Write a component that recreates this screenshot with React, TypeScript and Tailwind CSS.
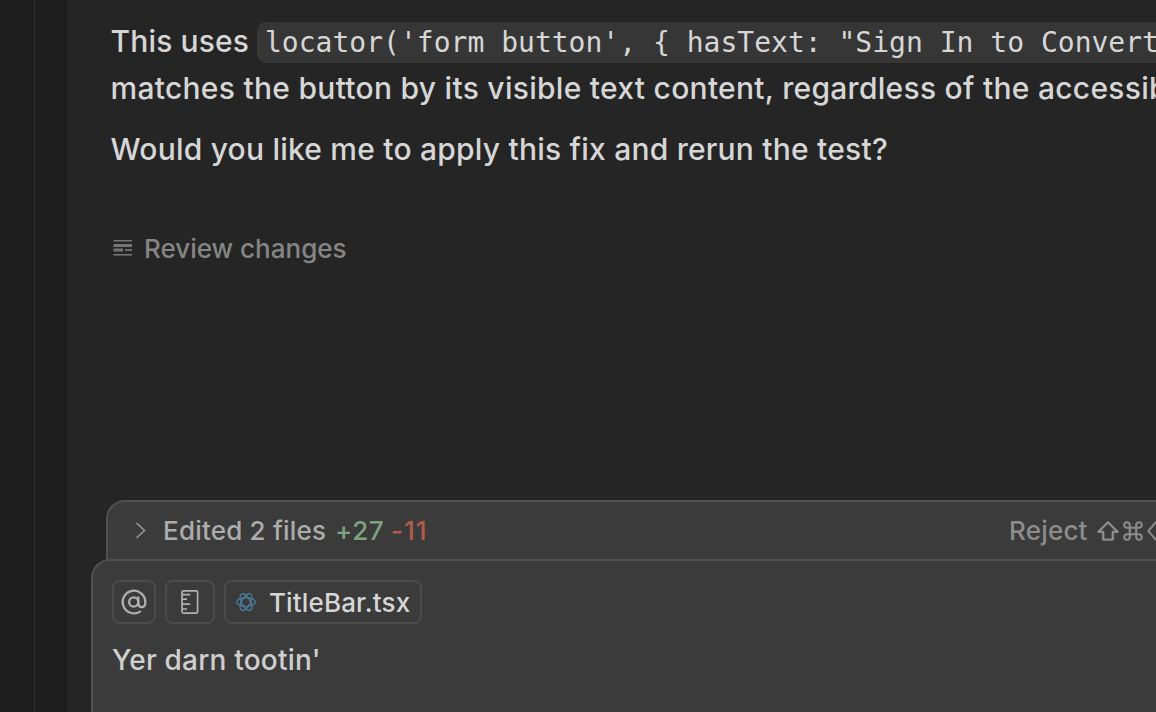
import type { ReactNode } from "react";

function Chip({ className, children }: { className: string; children: ReactNode }) {
  return (
    <button
      className={`flex h-11 shrink-0 items-center rounded-lg border-2 border-[#4b4b4b] ${className}`}
    >
      {children}
    </button>
  );
}

function LinesIcon() {
  return (
    <svg width="20" height="18" viewBox="0 0 20 18" fill="#757575" className="mt-0.5 shrink-0">
      <rect x="0.5" y="1" width="18.5" height="1.5" />
      <rect x="0.5" y="5" width="18.5" height="3" />
      <rect x="0.5" y="9.5" width="9.5" height="3" />
      <rect x="12" y="10.2" width="7" height="1.7" />
      <rect x="0.5" y="15" width="18.5" height="1.6" />
    </svg>
  );
}

function ChevronIcon() {
  return (
    <svg width="12" height="18" viewBox="0 0 12 18" fill="none" stroke="#9a9a9a" strokeWidth="1.5" className="shrink-0">
      <path d="M2.5 1l8 7.5-8 7.5" />
    </svg>
  );
}

function MentionIcon() {
  return (
    <svg width="26" height="26" viewBox="0 0 26 26" fill="none" stroke="#b0b0b0" strokeWidth="2.3" strokeLinecap="round">
      <circle cx="12.7" cy="13" r="4.6" />
      <path d="M17.3 8.4v6.2a3.5 3.5 0 0 0 7 0V13A11.3 11.3 0 1 0 19 22.6" />
    </svg>
  );
}

function RulerIcon() {
  return (
    <svg width="18" height="24" viewBox="0 0 18 24" fill="none" stroke="#b0b0b0" strokeWidth="1.7">
      <rect x="1" y="0.9" width="15.6" height="22.2" rx="1.5" />
      <path d="M1 4.6h8.2M1 9.2h5M1 14.2h8.2M1 19h5" />
    </svg>
  );
}

function ReactIcon() {
  return (
    <svg width="20" height="20" viewBox="-10 -10 20 20" fill="none" stroke="#4d87a8" strokeWidth="1.1" className="shrink-0">
      <ellipse rx="9.3" ry="4.3" />
      <ellipse rx="9.3" ry="4.3" transform="rotate(60)" />
      <ellipse rx="9.3" ry="4.3" transform="rotate(120)" />
    </svg>
  );
}

function ShiftIcon() {
  return (
    <svg width="22" height="20" viewBox="0 0 22 20" fill="none" stroke="#8c8c8c" strokeWidth="2.3" strokeLinejoin="round">
      <path d="M11 1.3L1.4 10.8h4.8v7.8h9.6v-7.8h4.8z" />
    </svg>
  );
}

function CommandIcon() {
  return (
    <svg width="20" height="20" viewBox="0 0 20 20" fill="none" stroke="#8c8c8c" strokeWidth="2.1">
      <path d="M6.8 6.8H4.1a2.8 2.8 0 1 1 2.7-2.8v12a2.8 2.8 0 1 1-2.7-2.8h11.8a2.8 2.8 0 1 1-2.7 2.8V4a2.8 2.8 0 1 1 2.7 2.8z" />
    </svg>
  );
}

function BackspaceIcon() {
  return (
    <svg width="26" height="20" viewBox="0 0 26 20" fill="none" stroke="#8c8c8c" strokeWidth="2.1" className="shrink-0">
      <path d="M8.5 1.5H25v17H8.5L1.3 10z" />
    </svg>
  );
}

export default function App() {
  return (
    <div className="flex h-[712px] w-[1156px] overflow-hidden bg-[#1e1e1e] font-['Inter',sans-serif] whitespace-nowrap text-[#d6d6d6]">
      <div className="w-[35px] shrink-0 border-r border-[#2d2d2d]" />
      <div className="w-8 shrink-0" />

      <main className="flex min-w-0 flex-1 flex-col overflow-hidden bg-[#252525]">
        {/* Assistant message */}
        <section className="flex flex-col pt-[19px] pl-[43.5px] text-[30px] leading-[46px] font-[450]">
          <p className="flex h-[46px] items-center">
            <span className="w-[146.5px] shrink-0 pb-[3px] tracking-[0.15px]">This uses</span>
            <code className="flex h-[41px] shrink-0 items-center rounded-l-[9px] bg-[#363636] pl-2 font-['DejaVu_Sans_Mono',monospace] text-[28px] leading-[41px] font-normal tracking-[0.01px]">
              {`locator('form button', { hasText: "Sign In to Convert`}
            </code>
          </p>
          <p className="tracking-[0.28px]">matches the button by its visible text content, regardless of the accessib</p>
          <p className="mt-[15px] tracking-[0.22px]">Would you like me to apply this fix and rerun the test?</p>
        </section>

        <div className="mt-[55px] flex h-10 items-center pl-[46px] text-[#858585]">
          <LinesIcon />
          <span className="ml-[11px] pt-0.5 text-[26px] font-[450]">Review changes</span>
        </div>

        {/* Pending edits bar */}
        <div className="mt-auto ml-[39px] flex h-[59px] shrink-0 items-center rounded-tl-[19px] border-t-2 border-l-2 border-[#515151] bg-[#3b3b3b] pl-[26px] text-[26px] font-[450]">
          <ChevronIcon />
          <span className="ml-[17px] w-[172px] shrink-0 tracking-[0.2px] text-[#acacac]">Edited 2 files</span>
          <span className="w-[56px] shrink-0 tracking-[0.6px] text-[#7fa381]">+27</span>
          <span className="tracking-[1px] text-[#b15a48]">-11</span>
          <div className="ml-auto flex w-[147px] shrink-0 items-center overflow-hidden text-[#8c8c8c]">
            <span className="w-[88px] shrink-0 tracking-[0.2px]">Reject</span>
            <div className="flex items-center gap-1">
              <ShiftIcon />
              <CommandIcon />
              <BackspaceIcon />
            </div>
          </div>
        </div>

        {/* Prompt input */}
        <div className="ml-6 flex h-[153px] shrink-0 flex-col rounded-tl-[19px] border-t-2 border-l-2 border-[#515151] bg-[#3b3b3b] pt-[19px] pl-[19px]">
          <div className="flex gap-[9px]">
            <Chip className="w-11 justify-center">
              <MentionIcon />
            </Chip>
            <Chip className="w-[50px] justify-center">
              <RulerIcon />
            </Chip>
            <Chip className="w-[198px] gap-[13px] pl-2.5">
              <ReactIcon />
              <span className="text-[26px] font-[450] tracking-[0.15px]">TitleBar.tsx</span>
            </Chip>
          </div>
          <p className="mt-4 text-[28px] leading-10 font-[450] tracking-[0.2px] text-[#cfcfcf]">Yer darn tootin'</p>
        </div>
      </main>
    </div>
  );
}
